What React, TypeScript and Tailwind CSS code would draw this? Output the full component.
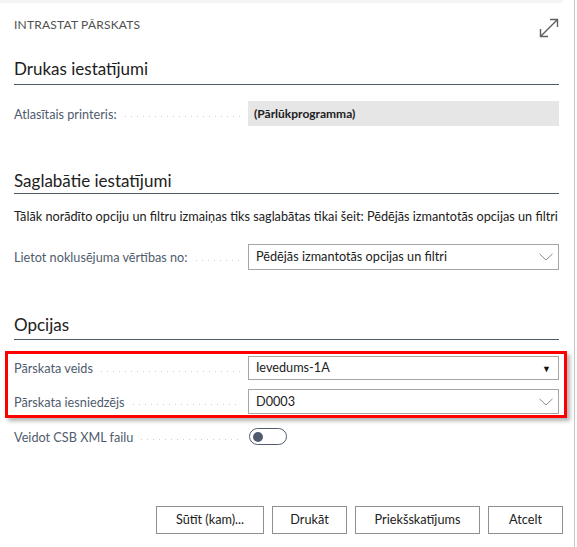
import type { ReactNode } from 'react';

const FONT = { fontFamily: 'Lato, "Open Sans", "Noto Sans", sans-serif' };

const Chevron = () => (
    <svg width="14" height="8" viewBox="0 0 14 8" className="shrink-0">
        <path d="M0.5 0.8 L7 7 L13.5 0.8" fill="none" stroke="#8c8c8c" strokeWidth="1" />
    </svg>
);

const ExpandIcon = () => (
    <svg width="20" height="20" viewBox="0 0 20 20" className="mt-px">
        <path d="M1.5 18.5 L18.5 1.5 M11 1.5 H18.5 V9 M1.5 11 V18.5 H9" fill="none" stroke="#5f5f5f" strokeWidth="1.4" />
    </svg>
);

const SectionHeader = ({ title, className }: { title: string; className: string }) => (
    <div className={`border-b border-[#505c6d] text-[17px] leading-[22px] text-[#212121] ${className}`}>
        {title}
    </div>
);

// label with the dotted leader running up to the value column
const Field = ({ label, children, height }: { label: string; children: ReactNode; height: string }) => (
    <div className={`flex items-center ${height}`}>
        <div className="w-[234px] shrink-0 flex items-center pr-[8px]">
            <span className="text-[12.7px] leading-[18px] text-[#505c6d] whitespace-nowrap">{label}</span>
            <div className="flex-1 ml-[8px] mt-[6px] h-px bg-[repeating-linear-gradient(to_right,#c9ccd2_0_1px,transparent_1px_6px)]" />
        </div>
        <div className="flex-1 h-full">{children}</div>
    </div>
);

const SelectBox = ({ value, icon }: { value: string; icon: ReactNode }) => (
    <div className="h-full border border-[#a6a6a6] bg-white flex items-center pl-[7px] pr-[5px]">
        <span className="flex-1 text-[12.7px] text-[#212121] whitespace-nowrap">{value}</span>
        {icon}
    </div>
);

const Button = ({ label, width }: { label: string; width: string }) => (
    <button className={`h-[28px] ${width} border border-[#8f8f8f] bg-white text-[12.7px] text-[#212121]`}>
        {label}
    </button>
);

export default function App() {
    return (
        <div className="w-[577px] h-[547px] bg-white overflow-hidden flex" style={FONT}>
            <div className="w-[574px] flex flex-col">
                <div className="h-[3px] w-[563px] bg-[#f5f5f5]" />

                <div className="pl-[14px] pr-[15px] flex flex-col">
                    {/* dialog title */}
                    <div className="mt-[14px] h-[22px] flex items-start justify-between">
                        <span className="text-[12px] leading-[16px] text-[#505050] tracking-[0.2px]">INTRASTAT PĀRSKATS</span>
                        <ExpandIcon />
                    </div>

                    <SectionHeader title="Drukas iestatījumi" className="mt-[19px] pb-[4px]" />

                    <div className="mt-[16px]">
                        <Field label="Atlasītais printeris:" height="h-[25px]">
                            <div className="h-full bg-[#e6e6e6] flex items-center pl-[6px] text-[12px] font-bold text-[#212121]">
                                (Pārlūkprogramma)
                            </div>
                        </Field>
                    </div>

                    <SectionHeader title="Saglabātie iestatījumi" className="mt-[44px] pb-px" />

                    <p className="mt-[13px] text-[12.7px] leading-[18px] text-[#212121] whitespace-nowrap">
                        Tālāk norādīto opciju un filtru izmaiņas tiks saglabātas tikai šeit: Pēdējās izmantotās opcijas un filtri
                    </p>

                    <div className="mt-[19px]">
                        <Field label="Lietot noklusējuma vērtības no:" height="h-[26px]">
                            <SelectBox value="Pēdējās izmantotās opcijas un filtri" icon={<Chevron />} />
                        </Field>
                    </div>

                    <SectionHeader title="Opcijas" className="mt-[44px] pb-[3px]" />

                    {/* highlighted fields */}
                    <div className="mt-[11px] -ml-[9px] -mr-[8px] border-[3px] border-[#ff0000] pl-[6px] pr-[5px] pt-[2px] pb-px shadow-[3px_3px_4px_rgba(0,0,0,0.3)] flex flex-col gap-[9px]">
                        <Field label="Pārskata veids" height="h-[24px]">
                            <SelectBox
                                value="Ievedums-1A"
                                icon={<span className="text-[9px] leading-none text-[#111] mr-[2px]">▼</span>}
                            />
                        </Field>
                        <Field label="Pārskata iesniedzējs" height="h-[25px]">
                            <SelectBox value="D0003" icon={<Chevron />} />
                        </Field>
                    </div>

                    <div className="mt-[10px]">
                        <Field label="Veidot CSB XML failu" height="h-[17px]">
                            <div className="ml-px w-[38px] h-[17px] rounded-full border-[1.5px] border-[#505c6d] flex items-center">
                                <div className="ml-[3px] w-[10px] h-[10px] rounded-full bg-[#505c6d]" />
                            </div>
                        </Field>
                    </div>

                    <div className="mt-[61px] -mr-[4px] flex justify-end gap-[8px]">
                        <Button label="Sūtīt (kam)..." width="w-[108px]" />
                        <Button label="Drukāt" width="w-[75px]" />
                        <Button label="Priekšskatījums" width="w-[125px]" />
                        <Button label="Atcelt" width="w-[75px]" />
                    </div>
                </div>
            </div>
            <div className="w-px h-full bg-[#c6c6c6]" />
        </div>
    );
}
